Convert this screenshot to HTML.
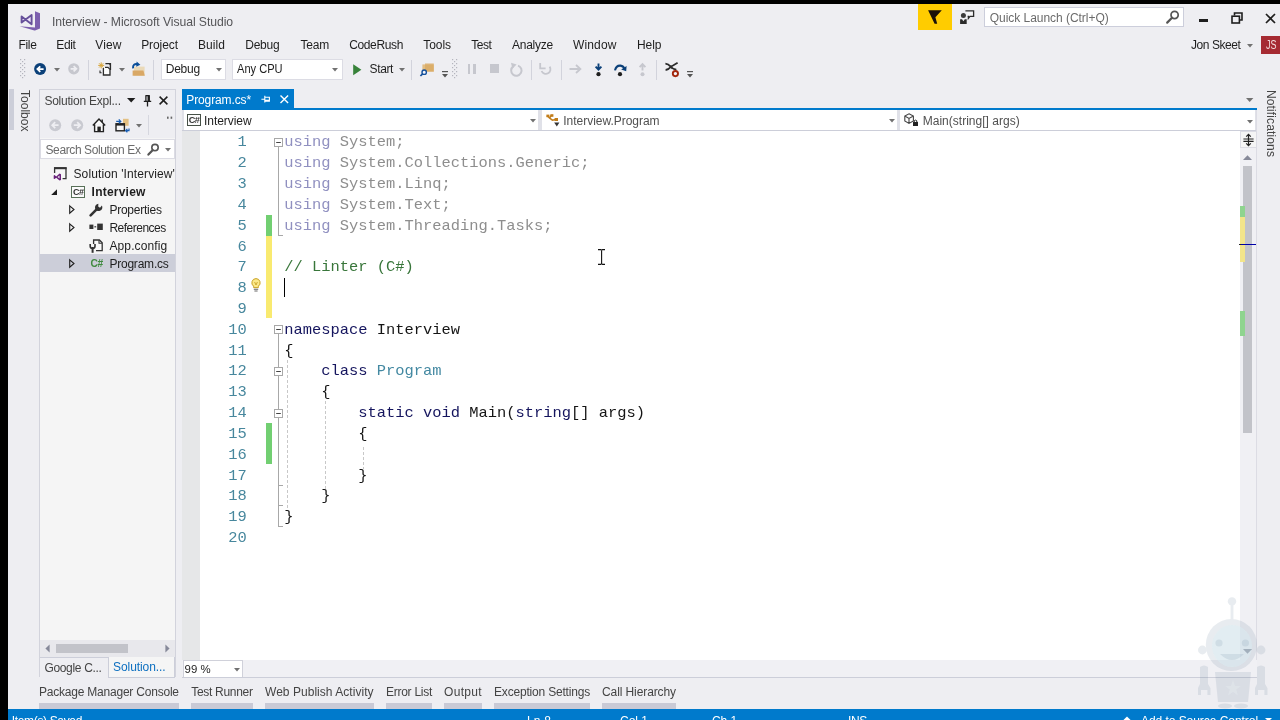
<!DOCTYPE html>
<html lang="en"><head><meta charset="utf-8"><title>Interview - Microsoft Visual Studio</title>
<style>
html,body{margin:0;padding:0;}
body{width:1280px;height:720px;overflow:hidden;background:#000;position:relative;font-family:"Liberation Sans",sans-serif;}
#app{position:absolute;left:8px;top:4px;width:1272px;height:716px;background:#eeeef2;overflow:hidden;}
#root{position:absolute;left:-8px;top:-4px;width:1280px;height:720px;will-change:transform;}
.t{position:absolute;white-space:pre;line-height:1;font-family:"Liberation Sans",sans-serif;font-size:12px;color:#1e1e1e;}
.m{font-family:"Liberation Mono",monospace;}
.b{position:absolute;box-sizing:border-box;}
svg{position:absolute;overflow:visible;}
</style></head><body><div id="app"><div id="root">
<!-- title bar -->
<svg style="left:19.00px;top:10.00px;" width="22" height="22" viewBox="0 0 22 22"><path d="M16 1.2 L21 3.2 V18.6 L16 20.6 Z" fill="#7c5fae"/><path d="M0.6 16.2 L16 17.4 V20.6 L15.4 20.6 Z" fill="#7c5fae"/><path d="M2.6 6.4 L12.6 14.2 V5 L2.6 12.4 Z" fill="#efe4fb" stroke="#66509a" stroke-width="1.9" stroke-linejoin="round"/></svg>
<span class="t" style="left:52.00px;top:16.00px;font-size:12.20px;color:#555558;letter-spacing:-0.067px;">Interview - Microsoft Visual Studio</span>
<div class="b" style="left:918.40px;top:4.00px;width:33.80px;height:25.80px;background:#ffcc00;"></div>
<svg style="left:927.00px;top:9.00px;" width="16" height="16" viewBox="0 0 16 16"><path d="M1.1 1.2 H14.8 L8.4 8.2 L10.2 14.8 H7.6 Z" fill="#1a1208"/></svg>
<svg style="left:958.00px;top:9.00px;" width="18" height="16" viewBox="0 0 18 16"><path d="M7.4 1.8 H15.6 V7.4 H12 L10.4 9.4 V7.4 H9.6" fill="#f4f4f6" stroke="#2b2b2b" stroke-width="1.3"/><circle cx="5.4" cy="6.4" r="2.5" fill="#3a3a3a"/><path d="M2.1 14.9 V10.3 H4 L5.4 12.2 L6.8 10.3 H8.7 V14.9 Z" fill="#2b2b2b"/></svg>
<div class="b" style="left:984.30px;top:6.60px;width:199.40px;height:20.80px;background:#fff;border:1px solid #cccedb;"></div>
<span class="t" style="left:989.70px;top:12.00px;font-size:12.00px;color:#6b6b6b;letter-spacing:-0.034px;">Quick Launch (Ctrl+Q)</span>
<svg style="left:1166.00px;top:10.00px;" width="14" height="14" viewBox="0 0 14 14"><circle cx="8.6" cy="5" r="3.6" fill="none" stroke="#555" stroke-width="1.7"/><path d="M6 7.8 L1.2 12.6" stroke="#555" stroke-width="2.2" stroke-linecap="round"/></svg>
<div class="b" style="left:1198.50px;top:18.60px;width:9.50px;height:3.00px;background:#1e1e1e;"></div>
<svg style="left:1231.00px;top:12.00px;" width="12" height="12" viewBox="0 0 12 12"><path d="M3.5 3.5 V1 H11 V8 H8.5" fill="none" stroke="#1e1e1e" stroke-width="1.6"/><rect x="1" y="4.2" width="7.4" height="6.8" fill="none" stroke="#1e1e1e" stroke-width="1.6"/></svg>
<svg style="left:1265.00px;top:13.00px;" width="11" height="11" viewBox="0 0 11 11"><path d="M1 1 L10 10 M10 1 L1 10" stroke="#1e1e1e" stroke-width="1.7"/></svg>
<!-- menu -->
<span class="t" style="left:18.40px;top:39.00px;font-size:12.00px;color:#1e1e1e;letter-spacing:-0.286px;">File</span>
<span class="t" style="left:56.30px;top:39.00px;font-size:12.00px;color:#1e1e1e;letter-spacing:-0.372px;">Edit</span>
<span class="t" style="left:95.30px;top:39.00px;font-size:12.00px;color:#1e1e1e;letter-spacing:0.101px;">View</span>
<span class="t" style="left:141.20px;top:39.00px;font-size:12.00px;color:#1e1e1e;letter-spacing:-0.080px;">Project</span>
<span class="t" style="left:198.00px;top:39.00px;font-size:12.00px;color:#1e1e1e;letter-spacing:0.062px;">Build</span>
<span class="t" style="left:245.20px;top:39.00px;font-size:12.00px;color:#1e1e1e;letter-spacing:-0.215px;">Debug</span>
<span class="t" style="left:300.50px;top:39.00px;font-size:12.00px;color:#1e1e1e;letter-spacing:-0.211px;">Team</span>
<span class="t" style="left:349.20px;top:39.00px;font-size:12.00px;color:#1e1e1e;letter-spacing:-0.363px;">CodeRush</span>
<span class="t" style="left:423.20px;top:39.00px;font-size:12.00px;color:#1e1e1e;letter-spacing:-0.043px;">Tools</span>
<span class="t" style="left:471.30px;top:39.00px;font-size:12.00px;color:#1e1e1e;letter-spacing:-0.454px;">Test</span>
<span class="t" style="left:512.00px;top:39.00px;font-size:12.00px;color:#1e1e1e;letter-spacing:-0.243px;">Analyze</span>
<span class="t" style="left:573.00px;top:39.00px;font-size:12.00px;color:#1e1e1e;letter-spacing:0.135px;">Window</span>
<span class="t" style="left:637.00px;top:39.00px;font-size:12.00px;color:#1e1e1e;letter-spacing:-0.047px;">Help</span>
<span class="t" style="left:1191.00px;top:39.00px;font-size:12.00px;color:#1e1e1e;letter-spacing:-0.431px;">Jon Skeet</span>
<svg style="left:1247.00px;top:44.10px;" width="6" height="3.4" viewBox="0 0 6 3.4"><path d="M0 0H6 L3 3.4Z" fill="#717171"/></svg>
<div class="b" style="left:1261.30px;top:35.80px;width:19.00px;height:18.60px;background:#a52a32;"></div>
<span class="t" style="left:1266.00px;top:39.00px;font-size:12.00px;color:#f3dede;transform-origin:0 0;transform:scaleX(0.7492);">JS</span>
<!-- toolbar -->
<svg style="left:19.60px;top:59.40px;" width="6" height="20" viewBox="0 0 6 20"><g fill="#b4b5be"><rect x="0" y="0" width="1.2" height="1.2"/><rect x="4" y="0" width="1.2" height="1.2"/><rect x="2" y="2" width="1.2" height="1.2"/><rect x="0" y="4" width="1.2" height="1.2"/><rect x="4" y="4" width="1.2" height="1.2"/><rect x="2" y="6" width="1.2" height="1.2"/><rect x="0" y="8" width="1.2" height="1.2"/><rect x="4" y="8" width="1.2" height="1.2"/><rect x="2" y="10" width="1.2" height="1.2"/><rect x="0" y="12" width="1.2" height="1.2"/><rect x="4" y="12" width="1.2" height="1.2"/><rect x="2" y="14" width="1.2" height="1.2"/><rect x="0" y="16" width="1.2" height="1.2"/><rect x="4" y="16" width="1.2" height="1.2"/><rect x="2" y="18" width="1.2" height="1.2"/></g></svg>
<svg style="left:33.90px;top:62.80px;" width="12.2" height="12.2" viewBox="0 0 12.2 12.2"><circle cx="6.1" cy="6.1" r="6" fill="#0b4079"/><path d="M9.6 6.1 H3.6 M6.3 3.3 L3.4 6.1 L6.3 8.9" fill="none" stroke="#fff" stroke-width="1.8"/></svg>
<svg style="left:54.00px;top:67.80px;" width="6" height="3.4" viewBox="0 0 6 3.4"><path d="M0 0H6 L3 3.4Z" fill="#717171"/></svg>
<svg style="left:68.20px;top:63.00px;" width="11.6" height="11.6" viewBox="0 0 11.6 11.6"><circle cx="5.8" cy="5.8" r="5.6" fill="#c6c7ce"/><path d="M2.6 5.8 H8.2 M5.6 3.2 L8.4 5.8 L5.6 8.4" fill="none" stroke="#eeeef2" stroke-width="1.7"/></svg>
<div class="b" style="left:87.80px;top:59.50px;width:1.00px;height:20.00px;background:#d2d3dc;"></div>
<svg style="left:97.00px;top:61.00px;" width="16" height="16" viewBox="0 0 16 16"><path d="M8.4 2.6 H13.4 V9" fill="none" stroke="#2c2c2c" stroke-width="1.4"/><path d="M11.2 2.2 H13.8 V5" fill="#2c2c2c"/><path d="M6.4 7 V14 H13 V8.4 L11 6.4 H8" fill="#fdfdfd" stroke="#2c2c2c" stroke-width="1.3"/><path d="M3 9.6 V11.8 H4.6" fill="none" stroke="#2c2c2c" stroke-width="1.1"/><path d="M4.2 1.4 V7.4 M1.2 4.4 H7.2 M2.1 2.3 L6.3 6.5 M6.3 2.3 L2.1 6.5" stroke="#d6a43a" stroke-width="1"/></svg>
<svg style="left:118.90px;top:67.80px;" width="6" height="3.4" viewBox="0 0 6 3.4"><path d="M0 0H6 L3 3.4Z" fill="#717171"/></svg>
<svg style="left:131.00px;top:60.50px;" width="17" height="17" viewBox="0 0 17 17"><path d="M3 5.6 H13.6 V14.6 H3 Z" fill="#ead9b8"/><path d="M1.6 9.6 H12.4 L13.8 14.8 H1.6 Z" fill="#d9a866"/><path d="M2 7.4 Q1.6 2 7 3.2" fill="none" stroke="#0b4f9a" stroke-width="1.9"/><path d="M5.6 0.6 L9.4 3.8 L5.2 5.8 Z" fill="#0b4f9a"/></svg>
<div class="b" style="left:153.00px;top:59.50px;width:1.00px;height:20.00px;background:#d2d3dc;"></div>
<div class="b" style="left:161.00px;top:58.50px;width:64.60px;height:21.20px;background:#fff;border:1px solid #dcdce4;"></div>
<span class="t" style="left:165.80px;top:63.00px;font-size:12.00px;color:#1e1e1e;letter-spacing:-0.275px;">Debug</span>
<svg style="left:215.60px;top:67.50px;" width="6" height="3.4" viewBox="0 0 6 3.4"><path d="M0 0H6 L3 3.4Z" fill="#717171"/></svg>
<div class="b" style="left:232.20px;top:58.50px;width:110.60px;height:21.20px;background:#fff;border:1px solid #dcdce4;"></div>
<span class="t" style="left:236.60px;top:63.00px;font-size:12.00px;color:#1e1e1e;transform-origin:0 0;transform:scaleX(0.9238);">Any CPU</span>
<svg style="left:331.60px;top:67.50px;" width="6" height="3.4" viewBox="0 0 6 3.4"><path d="M0 0H6 L3 3.4Z" fill="#717171"/></svg>
<svg style="left:353.20px;top:63.60px;" width="9" height="11.4" viewBox="0 0 9 11.4"><path d="M0.2 0.2 L8.4 5.7 L0.2 11.2 Z" fill="#37823a"/></svg>
<span class="t" style="left:369.50px;top:63.00px;font-size:12.00px;color:#1e1e1e;letter-spacing:-0.349px;">Start</span>
<svg style="left:399.00px;top:67.50px;" width="6" height="3.4" viewBox="0 0 6 3.4"><path d="M0 0H6 L3 3.4Z" fill="#717171"/></svg>
<div class="b" style="left:411.00px;top:59.50px;width:1.00px;height:20.00px;background:#d2d3dc;"></div>
<svg style="left:420.00px;top:60.50px;" width="17" height="17" viewBox="0 0 17 17"><path d="M2.4 3.4 H13.8 V10.6 H2.4 Z" fill="#e2bd83"/><path d="M5 2.4 h8.8 v8.2 h-8.8z" fill="#d9a860" opacity=".7"/><circle cx="4.2" cy="11.2" r="2.2" fill="#f4f4f8" stroke="#14509c" stroke-width="1.4"/><path d="M2.6 12.8 L0.4 15" stroke="#14509c" stroke-width="1.7"/></svg>
<svg style="left:441.80px;top:71.30px;" width="6" height="7" viewBox="0 0 6 7"><rect x="0" y="0" width="6" height="1.2" fill="#555"/><path d="M0 3 H6 L3 6.4Z" fill="#555"/></svg>
<svg style="left:452.40px;top:59.40px;" width="6" height="20" viewBox="0 0 6 20"><g fill="#b4b5be"><rect x="0" y="0" width="1.2" height="1.2"/><rect x="4" y="0" width="1.2" height="1.2"/><rect x="2" y="2" width="1.2" height="1.2"/><rect x="0" y="4" width="1.2" height="1.2"/><rect x="4" y="4" width="1.2" height="1.2"/><rect x="2" y="6" width="1.2" height="1.2"/><rect x="0" y="8" width="1.2" height="1.2"/><rect x="4" y="8" width="1.2" height="1.2"/><rect x="2" y="10" width="1.2" height="1.2"/><rect x="0" y="12" width="1.2" height="1.2"/><rect x="4" y="12" width="1.2" height="1.2"/><rect x="2" y="14" width="1.2" height="1.2"/><rect x="0" y="16" width="1.2" height="1.2"/><rect x="4" y="16" width="1.2" height="1.2"/><rect x="2" y="18" width="1.2" height="1.2"/></g></svg>
<div class="b" style="left:467.60px;top:64.00px;width:2.80px;height:10.00px;background:#c6c7ce;"></div><div class="b" style="left:472.80px;top:64.00px;width:2.80px;height:10.00px;background:#c6c7ce;"></div>
<div class="b" style="left:489.60px;top:64.40px;width:9.00px;height:9.00px;background:#c6c7ce;"></div>
<svg style="left:509.00px;top:61.50px;" width="14" height="15" viewBox="0 0 14 15"><path d="M4.2 4.4 A5.2 5.2 0 1 0 9 3.6" fill="none" stroke="#c6c7ce" stroke-width="2"/><path d="M2 0.8 L7.6 2.6 L3.4 6.8 Z" fill="#c6c7ce"/></svg>
<div class="b" style="left:530.60px;top:59.50px;width:1.00px;height:20.00px;background:#d2d3dc;"></div>
<svg style="left:539.00px;top:62.00px;" width="14" height="14" viewBox="0 0 14 14"><path d="M3.4 4.6 A4.6 4.6 0 1 0 11.4 9" fill="none" stroke="#c6c7ce" stroke-width="1.8" transform="scale(-1,1) translate(-14,0)"/><path d="M1.2 1 V6.4 H6.6" fill="none" stroke="#c6c7ce" stroke-width="1.8"/></svg>
<div class="b" style="left:560.80px;top:59.50px;width:1.00px;height:20.00px;background:#d2d3dc;"></div>
<svg style="left:568.50px;top:64.00px;" width="13" height="10" viewBox="0 0 13 10"><path d="M0.5 5 H11 M7 1 L11.4 5 L7 9" fill="none" stroke="#c6c7ce" stroke-width="1.8"/></svg>
<svg style="left:592.50px;top:61.50px;" width="11" height="15" viewBox="0 0 11 15"><path d="M5.5 1.4 V7 M2.6 4.6 L5.5 7.6 L8.4 4.6" fill="none" stroke="#0b4079" stroke-width="1.9"/><circle cx="5.5" cy="12.2" r="2.1" fill="#1e1e1e"/></svg>
<svg style="left:612.00px;top:61.50px;" width="16" height="15" viewBox="0 0 16 15"><path d="M3 8.4 Q4 3.4 8.4 3.6 Q11.6 4 12.4 7" fill="none" stroke="#0b4079" stroke-width="2.1"/><path d="M9.2 7.4 L14.6 4 L14.2 9.2 Z" fill="#0b4079"/><circle cx="8" cy="12.2" r="2.1" fill="#1e1e1e"/></svg>
<svg style="left:636.50px;top:61.50px;" width="11" height="15" viewBox="0 0 11 15"><path d="M5.5 8.4 V2.6 M2.6 5.2 L5.5 2.2 L8.4 5.2" fill="none" stroke="#c6c7ce" stroke-width="1.9"/><circle cx="5.5" cy="12.2" r="2" fill="#c6c7ce"/></svg>
<div class="b" style="left:656.20px;top:59.50px;width:1.00px;height:20.00px;background:#d2d3dc;"></div>
<svg style="left:664.00px;top:61.50px;" width="17" height="16" viewBox="0 0 17 16"><path d="M1.4 1.6 Q4.4 1.8 6.6 4.6 Q9 7.6 12.4 7.6 M1.6 8 Q4.6 7.8 6.8 4.8 L13.6 0.8" fill="none" stroke="#2b2b2b" stroke-width="1.8"/><circle cx="11.4" cy="11.6" r="2.6" fill="#f4f4f8" stroke="#a1260d" stroke-width="1.9"/></svg>
<svg style="left:687.00px;top:71.30px;" width="6" height="7" viewBox="0 0 6 7"><rect x="0" y="0" width="6" height="1.2" fill="#555"/><path d="M0 3 H6 L3 6.4Z" fill="#555"/></svg>
<!-- toolbox -->
<div class="b" style="left:8.60px;top:89.00px;width:5.00px;height:41.00px;background:#ccced9;"></div>
<span class="t" style="left:31px;top:89.8px;font-size:12px;color:#444;transform-origin:0 0;transform:rotate(90deg);letter-spacing:0.02px;">Toolbox</span>
<span class="t" style="left:1277.4px;top:89.8px;font-size:12px;color:#444;transform-origin:0 0;transform:rotate(90deg);letter-spacing:0.13px;">Notifications</span>
<!-- solution explorer -->
<div class="b" style="left:39.00px;top:89.00px;width:137.00px;height:588.40px;background:#f5f5f5;border:1px solid #d2d3dc;"></div>
<div class="b" style="left:40.00px;top:90.00px;width:135.00px;height:22.00px;background:#eeeef2;"></div>
<span class="t" style="left:44.40px;top:95.00px;font-size:12.00px;color:#444;letter-spacing:-0.228px;">Solution Expl...</span>
<svg style="left:126.80px;top:97.90px;" width="8.4" height="4.6" viewBox="0 0 8.4 4.6"><path d="M0 0H8.4 L4.2 4.6Z" fill="#1e1e1e"/></svg>
<svg style="left:143.00px;top:94.60px;" width="9" height="12" viewBox="0 0 9 12"><path d="M2.4 0.7 H6.8 M2.9 0.7 V6.2 M6.3 0.7 V6.2 M5.2 0.7 V6.2 M0.8 6.4 H8.2 M4.5 6.6 V11.6" fill="none" stroke="#1e1e1e" stroke-width="1.3"/></svg>
<svg style="left:159.40px;top:95.60px;" width="9" height="9" viewBox="0 0 9 9"><path d="M0.6 0.6 L8.4 8.4 M8.4 0.6 L0.6 8.4" stroke="#1e1e1e" stroke-width="1.5"/></svg>
<div class="b" style="left:40.00px;top:112.00px;width:135.00px;height:26.00px;background:#eeeef2;"></div>
<svg style="left:49.00px;top:119.00px;" width="12.4" height="12.4" viewBox="0 0 12.4 12.4"><circle cx="6.2" cy="6.2" r="6" fill="#c9cad1"/><path d="M9.6 6.2 H3.4 M6.2 3.2 L3.2 6.2 L6.2 9.2" fill="none" stroke="#eeeef2" stroke-width="1.7"/></svg>
<svg style="left:70.50px;top:119.00px;" width="12.4" height="12.4" viewBox="0 0 12.4 12.4"><circle cx="6.2" cy="6.2" r="6" fill="#c9cad1"/><path d="M2.8 6.2 H9 M6.2 3.2 L9.2 6.2 L6.2 9.2" fill="none" stroke="#eeeef2" stroke-width="1.7"/></svg>
<svg style="left:92.00px;top:118.00px;" width="14" height="14.4" viewBox="0 0 14 14.4"><path d="M0.8 7.4 L7 1 L13.2 7.4 M2.6 6.4 V13.6 H11.4 V6.4" fill="#fafafa" stroke="#222" stroke-width="1.4"/><rect x="5.4" y="8.6" width="3.4" height="5" fill="#222"/><path d="M10.2 1.6 V4" stroke="#222" stroke-width="1.4"/></svg>
<svg style="left:114.60px;top:117.60px;" width="15" height="14" viewBox="0 0 15 14"><rect x="8" y="0.8" width="5.6" height="7" fill="#e3c083"/><rect x="1" y="5.8" width="8.4" height="7" fill="#f6f6f6" stroke="#222" stroke-width="1.4"/><path d="M1 6.6 H9.4" stroke="#222" stroke-width="2"/><path d="M1.2 3.4 H5.4 M3.8 1.4 L5.8 3.4 L3.8 5.2" fill="none" stroke="#1a5fb4" stroke-width="1.2"/><path d="M14 10.4 V12.6 H10.8 M12.4 10.8 L10.6 12.6 L12.4 14.2" fill="none" stroke="#1a5fb4" stroke-width="1.2"/></svg>
<svg style="left:136.00px;top:123.70px;" width="6" height="3.4" viewBox="0 0 6 3.4"><path d="M0 0H6 L3 3.4Z" fill="#717171"/></svg>
<div class="b" style="left:148.40px;top:114.60px;width:1.00px;height:20.60px;background:#d6d7df;"></div>
<svg style="left:166.60px;top:115.60px;" width="6" height="4" viewBox="0 0 6 4"><rect x="0" y="0.6" width="1.6" height="2.2" fill="#666"/><rect x="3.6" y="0.6" width="1.6" height="2.2" fill="#666"/></svg>
<div class="b" style="left:40.00px;top:139.00px;width:135.00px;height:20.40px;background:#fff;border:1px solid #dcdce4;"></div>
<span class="t" style="left:45.50px;top:144.00px;font-size:12.00px;color:#6b6b6b;letter-spacing:-0.392px;">Search Solution Ex</span>
<svg style="left:147.40px;top:143.00px;" width="13" height="13" viewBox="0 0 13 13"><circle cx="8" cy="4.6" r="3.2" fill="none" stroke="#555" stroke-width="1.6"/><path d="M5.6 7.2 L1.4 11.6" stroke="#555" stroke-width="2.2" stroke-linecap="round"/></svg>
<svg style="left:164.60px;top:147.70px;" width="6" height="3.4" viewBox="0 0 6 3.4"><path d="M0 0H6 L3 3.4Z" fill="#717171"/></svg>
<div class="b" style="left:40.00px;top:254.40px;width:135.00px;height:18.00px;background:#ccced9;"></div>
<svg style="left:53.00px;top:167.00px;" width="14.4" height="14" viewBox="0 0 14.4 14"><path d="M1.6 6 V1 H13 V11.6 H9.6" fill="none" stroke="#333" stroke-width="1.3"/><path d="M1 1.2 H13.6" stroke="#333" stroke-width="2"/><path d="M6.6 6.6 L8 7.2 V13 L6.6 13.6 L3.2 10.8 L1.6 12.1 L0.7 11.7 V8.5 L1.6 8.1 L3.2 9.4 Z M6.5 8.6 L4.6 10.1 L6.5 11.6 Z" fill="#68217a" fill-rule="evenodd"/></svg>
<span class="t" style="left:73.50px;top:168.00px;font-size:12.00px;color:#1e1e1e;letter-spacing:0.109px;">Solution 'Interview'</span>
<svg style="left:50.60px;top:188.50px;" width="6.4" height="6.4" viewBox="0 0 6.4 6.4"><path d="M6 0.2 V6 H0.2 Z" fill="#1e1e1e"/></svg>
<div class="b" style="left:71.20px;top:186.20px;width:13.80px;height:11.60px;background:#fbfbfb;border:1px solid #587058;"></div><span class="t" style="left:73.00px;top:187.70px;font-size:9.0px;font-weight:700;color:#333;letter-spacing:-0.6px;">C#</span>
<span class="t" style="left:91.60px;top:186.00px;font-size:12.00px;color:#1e1e1e;font-weight:700;letter-spacing:0.219px;">Interview</span>
<svg style="left:69.00px;top:205.00px;" width="6" height="9" viewBox="0 0 6 9"><path d="M0.7 0.8 L5 4.5 L0.7 8.2 Z" fill="none" stroke="#1e1e1e" stroke-width="1.1"/></svg>
<svg style="left:89.00px;top:202.60px;" width="14" height="14" viewBox="0 0 14 14"><path d="M1.6 12.4 L7.6 6.4" stroke="#333" stroke-width="2.6" stroke-linecap="round"/><path d="M12.9 2.6 A3.7 3.7 0 1 1 9.4 0.7 L9.2 3.4 L11 4.8 Z" fill="#333"/></svg>
<span class="t" style="left:109.40px;top:204.00px;font-size:12.00px;color:#1e1e1e;letter-spacing:-0.240px;">Properties</span>
<svg style="left:69.00px;top:223.00px;" width="6" height="9" viewBox="0 0 6 9"><path d="M0.7 0.8 L5 4.5 L0.7 8.2 Z" fill="none" stroke="#1e1e1e" stroke-width="1.1"/></svg>
<svg style="left:89.00px;top:222.00px;" width="14" height="10" viewBox="0 0 14 10"><rect x="0.4" y="2.6" width="4" height="4.4" fill="#333"/><rect x="5.4" y="4.2" width="1.8" height="1.2" fill="#333"/><rect x="8.2" y="1.6" width="5.6" height="6.4" fill="#333"/></svg>
<span class="t" style="left:109.40px;top:222.00px;font-size:12.00px;color:#1e1e1e;letter-spacing:-0.498px;">References</span>
<svg style="left:89.00px;top:238.80px;" width="14" height="15" viewBox="0 0 14 15"><path d="M4.6 5 V1 H10.4 L13.2 3.8 V11.6 H7" fill="#fafafa" stroke="#333" stroke-width="1.3"/><path d="M10 1.2 V4.2 H13" fill="none" stroke="#333" stroke-width="1.1"/><path d="M3.6 8 V13.8" stroke="#333" stroke-width="2"/><path d="M1.2 5 V7.2 Q1.2 9.4 3.6 9.4 Q6 9.4 6 7.2 V5" fill="none" stroke="#333" stroke-width="1.6"/></svg>
<span class="t" style="left:109.40px;top:240.00px;font-size:12.00px;color:#1e1e1e;letter-spacing:0.128px;">App.config</span>
<svg style="left:69.00px;top:259.00px;" width="6" height="9" viewBox="0 0 6 9"><path d="M0.7 0.8 L5 4.5 L0.7 8.2 Z" fill="none" stroke="#1e1e1e" stroke-width="1.1"/></svg>
<span class="t" style="left:90.6px;top:259px;font-size:10.2px;font-weight:700;color:#3f8a3f;letter-spacing:-0.4px;">C#</span>
<span class="t" style="left:109.40px;top:258.00px;font-size:12.00px;color:#1e1e1e;letter-spacing:-0.216px;">Program.cs</span>
<div class="b" style="left:40.00px;top:640.00px;width:135.00px;height:17.00px;background:#e8e8ec;"></div>
<svg style="left:45.00px;top:644.00px;" width="5" height="9" viewBox="0 0 5 9"><path d="M4.6 0.4 V8.6 L0.4 4.5 Z" fill="#868999"/></svg>
<svg style="left:164.60px;top:644.00px;" width="5" height="9" viewBox="0 0 5 9"><path d="M0.4 0.4 V8.6 L4.6 4.5 Z" fill="#868999"/></svg>
<div class="b" style="left:56.00px;top:643.80px;width:72.00px;height:8.80px;background:#c2c3c9;"></div>
<div class="b" style="left:40.00px;top:657.00px;width:135.00px;height:1.00px;background:#ccced9;"></div>
<div class="b" style="left:40.00px;top:658.00px;width:68.00px;height:19.40px;background:#eeeef2;"></div>
<div class="b" style="left:108.00px;top:657.00px;width:67.10px;height:20.50px;background:#f5f5f5;border:1px solid #ccced9;border-top:none;"></div>
<span class="t" style="left:44.40px;top:662.00px;font-size:12.00px;color:#444;letter-spacing:-0.318px;">Google C...</span>
<span class="t" style="left:113.00px;top:661.00px;font-size:12.00px;color:#0e70c0;letter-spacing:-0.070px;">Solution...</span>
<!-- editor -->
<div class="b" style="left:182.00px;top:89.00px;width:112.00px;height:19.00px;background:#007acc;"></div>
<div class="b" style="left:182.00px;top:107.60px;width:1074.80px;height:2.40px;background:#007acc;"></div>
<span class="t" style="left:186.30px;top:94.00px;font-size:12.00px;color:#fff;letter-spacing:-0.121px;">Program.cs*</span>
<svg style="left:261.00px;top:95.40px;" width="9.4" height="8.4" viewBox="0 0 9.4 8.4"><path d="M0.4 4.2 H3.8 M3.8 0.8 V7.6 M3.8 2.2 H8.4 V6.2 H3.8 M3.8 5.4 H8.4" fill="none" stroke="#fff" stroke-width="1.1"/></svg>
<svg style="left:280.00px;top:95.40px;" width="8.6" height="8.6" viewBox="0 0 8.6 8.6"><path d="M0.5 0.5 L8.1 8.1 M8.1 0.5 L0.5 8.1" stroke="#fff" stroke-width="1.4"/></svg>
<svg style="left:1246.30px;top:97.80px;" width="7.4" height="4" viewBox="0 0 7.4 4"><path d="M0 0H7.4 L3.7 4Z" fill="#717171"/></svg>
<div class="b" style="left:182.00px;top:110.00px;width:1074.80px;height:21.00px;background:#e0e1e8;"></div>
<div class="b" style="left:184.00px;top:110.40px;width:354.00px;height:19.80px;background:#fff;"></div>
<div class="b" style="left:542.20px;top:110.40px;width:354.40px;height:19.80px;background:#fff;"></div>
<div class="b" style="left:900.40px;top:110.40px;width:355.00px;height:19.80px;background:#fff;"></div>
<div class="b" style="left:182.00px;top:130.20px;width:1074.80px;height:1.00px;background:#ccced9;"></div>
<div class="b" style="left:187.00px;top:114.00px;width:14.00px;height:12.00px;background:#fbfbfb;border:1px solid #465046;"></div><span class="t" style="left:188.80px;top:115.60px;font-size:9.2px;font-weight:700;color:#333;letter-spacing:-0.6px;">C#</span>
<span class="t" style="left:204.00px;top:115.00px;font-size:12.00px;color:#1e1e1e;letter-spacing:-0.048px;">Interview</span>
<svg style="left:529.80px;top:119.30px;" width="6" height="3.4" viewBox="0 0 6 3.4"><path d="M0 0H6 L3 3.4Z" fill="#717171"/></svg>
<svg style="left:546.00px;top:113.60px;" width="14" height="13" viewBox="0 0 14 13"><path d="M1 1.6 L3.6 4 M5.4 1.2 L3.6 4 L6.4 6.2 L9.6 5.4" fill="none" stroke="#c27d1a" stroke-width="1.5"/><rect x="0.4" y="0.6" width="3" height="2.6" fill="#c27d1a"/><rect x="4.4" y="0.2" width="3" height="2.6" fill="#c27d1a"/><rect x="8.6" y="4" width="3.4" height="3" fill="#c27d1a"/><path d="M8.2 8.4 H13.4 L10.8 12.6 Z" fill="#333"/></svg>
<span class="t" style="left:563.30px;top:115.00px;font-size:12.00px;color:#505050;letter-spacing:-0.030px;">Interview.Program</span>
<svg style="left:888.80px;top:119.30px;" width="6" height="3.4" viewBox="0 0 6 3.4"><path d="M0 0H6 L3 3.4Z" fill="#717171"/></svg>
<svg style="left:904.00px;top:113.40px;" width="15" height="14" viewBox="0 0 15 14"><path d="M5 0.8 L9.4 3 V8 L5 10.4 L0.8 8 V3 Z M0.8 3 L5 5.4 L9.4 3 M5 5.4 V10.4" fill="none" stroke="#444" stroke-width="1.1"/><rect x="9" y="9" width="5" height="4" fill="#222"/><path d="M10.2 9 V7.8 Q11.5 6.4 12.8 7.8 V9" fill="none" stroke="#222" stroke-width="1"/></svg>
<span class="t" style="left:922.70px;top:115.00px;font-size:12.00px;color:#505050;letter-spacing:0.016px;">Main(string[] args)</span>
<svg style="left:1247.00px;top:119.70px;" width="6" height="3.4" viewBox="0 0 6 3.4"><path d="M0 0H6 L3 3.4Z" fill="#717171"/></svg>
<div class="b" style="left:182.00px;top:131.20px;width:1074.80px;height:529.00px;background:#fff;"></div>
<div class="b" style="left:182.00px;top:131.20px;width:18.00px;height:529.00px;background:#e6e7e8;"></div>
<div class="b" style="left:266.20px;top:215.20px;width:5.80px;height:20.80px;background:#72cf72;"></div>
<div class="b" style="left:266.20px;top:236.00px;width:5.80px;height:82.40px;background:#f9ea70;"></div>
<div class="b" style="left:266.20px;top:422.60px;width:5.80px;height:41.60px;background:#72cf72;"></div>
<span class="t m" style="left:237.55px;top:135.00px;font-size:15.41px;color:#47879d;">1</span>
<span class="t m" style="left:237.55px;top:156.00px;font-size:15.41px;color:#47879d;">2</span>
<span class="t m" style="left:237.55px;top:177.00px;font-size:15.41px;color:#47879d;">3</span>
<span class="t m" style="left:237.55px;top:198.00px;font-size:15.41px;color:#47879d;">4</span>
<span class="t m" style="left:237.55px;top:219.00px;font-size:15.41px;color:#47879d;">5</span>
<span class="t m" style="left:237.55px;top:240.00px;font-size:15.41px;color:#47879d;">6</span>
<span class="t m" style="left:237.55px;top:260.00px;font-size:15.41px;color:#47879d;">7</span>
<span class="t m" style="left:237.55px;top:281.00px;font-size:15.41px;color:#47879d;">8</span>
<span class="t m" style="left:237.55px;top:302.00px;font-size:15.41px;color:#47879d;">9</span>
<span class="t m" style="left:228.30px;top:323.00px;font-size:15.41px;color:#47879d;">10</span>
<span class="t m" style="left:228.30px;top:344.00px;font-size:15.41px;color:#47879d;">11</span>
<span class="t m" style="left:228.30px;top:364.00px;font-size:15.41px;color:#47879d;">12</span>
<span class="t m" style="left:228.30px;top:385.00px;font-size:15.41px;color:#47879d;">13</span>
<span class="t m" style="left:228.30px;top:406.00px;font-size:15.41px;color:#47879d;">14</span>
<span class="t m" style="left:228.30px;top:427.00px;font-size:15.41px;color:#47879d;">15</span>
<span class="t m" style="left:228.30px;top:448.00px;font-size:15.41px;color:#47879d;">16</span>
<span class="t m" style="left:228.30px;top:469.00px;font-size:15.41px;color:#47879d;">17</span>
<span class="t m" style="left:228.30px;top:489.00px;font-size:15.41px;color:#47879d;">18</span>
<span class="t m" style="left:228.30px;top:510.00px;font-size:15.41px;color:#47879d;">19</span>
<span class="t m" style="left:228.30px;top:531.00px;font-size:15.41px;color:#47879d;">20</span>
<span class="t m" style="left:284.30px;top:135.00px;font-size:15.41px;color:#9090c0;">using</span>
<span class="t m" style="left:330.54px;top:135.00px;font-size:15.41px;color:#8e8e8e;"> </span>
<span class="t m" style="left:339.79px;top:135.00px;font-size:15.41px;color:#8e8e8e;">System;</span>
<span class="t m" style="left:284.30px;top:156.00px;font-size:15.41px;color:#9090c0;">using</span>
<span class="t m" style="left:330.54px;top:156.00px;font-size:15.41px;color:#8e8e8e;"> </span>
<span class="t m" style="left:339.79px;top:156.00px;font-size:15.41px;color:#8e8e8e;">System.Collections.Generic;</span>
<span class="t m" style="left:284.30px;top:177.00px;font-size:15.41px;color:#9090c0;">using</span>
<span class="t m" style="left:330.54px;top:177.00px;font-size:15.41px;color:#8e8e8e;"> </span>
<span class="t m" style="left:339.79px;top:177.00px;font-size:15.41px;color:#8e8e8e;">System.Linq;</span>
<span class="t m" style="left:284.30px;top:198.00px;font-size:15.41px;color:#9090c0;">using</span>
<span class="t m" style="left:330.54px;top:198.00px;font-size:15.41px;color:#8e8e8e;"> </span>
<span class="t m" style="left:339.79px;top:198.00px;font-size:15.41px;color:#8e8e8e;">System.Text;</span>
<span class="t m" style="left:284.30px;top:219.00px;font-size:15.41px;color:#9090c0;">using</span>
<span class="t m" style="left:330.54px;top:219.00px;font-size:15.41px;color:#8e8e8e;"> </span>
<span class="t m" style="left:339.79px;top:219.00px;font-size:15.41px;color:#8e8e8e;">System.Threading.Tasks;</span>
<span class="t m" style="left:284.30px;top:260.00px;font-size:15.41px;color:#38763a;">// Linter (C#)</span>
<span class="t m" style="left:284.30px;top:323.00px;font-size:15.41px;color:#15155e;">namespace</span>
<span class="t m" style="left:367.53px;top:323.00px;font-size:15.41px;color:#151515;"> </span>
<span class="t m" style="left:376.78px;top:323.00px;font-size:15.41px;color:#151515;">Interview</span>
<span class="t m" style="left:284.30px;top:344.00px;font-size:15.41px;color:#151515;">{</span>
<span class="t m" style="left:321.29px;top:364.00px;font-size:15.41px;color:#15155e;">class</span>
<span class="t m" style="left:367.53px;top:364.00px;font-size:15.41px;color:#151515;"> </span>
<span class="t m" style="left:376.78px;top:364.00px;font-size:15.41px;color:#4489a2;">Program</span>
<span class="t m" style="left:321.29px;top:385.00px;font-size:15.41px;color:#151515;">{</span>
<span class="t m" style="left:358.28px;top:406.00px;font-size:15.41px;color:#15155e;">static</span>
<span class="t m" style="left:413.77px;top:406.00px;font-size:15.41px;color:#151515;"> </span>
<span class="t m" style="left:423.02px;top:406.00px;font-size:15.41px;color:#15155e;">void</span>
<span class="t m" style="left:460.01px;top:406.00px;font-size:15.41px;color:#151515;"> </span>
<span class="t m" style="left:469.26px;top:406.00px;font-size:15.41px;color:#151515;">Main(</span>
<span class="t m" style="left:515.50px;top:406.00px;font-size:15.41px;color:#15155e;">string</span>
<span class="t m" style="left:570.99px;top:406.00px;font-size:15.41px;color:#151515;">[] args)</span>
<span class="t m" style="left:358.28px;top:427.00px;font-size:15.41px;color:#151515;">{</span>
<span class="t m" style="left:358.28px;top:469.00px;font-size:15.41px;color:#151515;">}</span>
<span class="t m" style="left:321.29px;top:489.00px;font-size:15.41px;color:#151515;">}</span>
<span class="t m" style="left:284.30px;top:510.00px;font-size:15.41px;color:#151515;">}</span>
<div class="b" style="left:284.00px;top:277.60px;width:1.00px;height:19.60px;background:#000;"></div>
<div class="b" style="left:278.00px;top:147.30px;width:1.00px;height:88.10px;background:#a8a8a8;"></div><div class="b" style="left:278.00px;top:234.60px;width:5.00px;height:1.00px;background:#a8a8a8;"></div>
<svg style="left:273.80px;top:138.05px;" width="9" height="9" viewBox="0 0 9 9"><rect x="0.5" y="0.5" width="8" height="8" fill="#fff" stroke="#a8a8a8"/><path d="M2.2 4.5 H6.8" stroke="#444" stroke-width="1"/></svg>
<div class="b" style="left:278.00px;top:334.43px;width:1.00px;height:192.38px;background:#a8a8a8;"></div><div class="b" style="left:278.00px;top:526.21px;width:5.00px;height:1.00px;background:#a8a8a8;"></div>
<div class="b" style="left:278.00px;top:505.39px;width:5.00px;height:1.00px;background:#a8a8a8;"></div><div class="b" style="left:278.00px;top:484.57px;width:5.00px;height:1.00px;background:#a8a8a8;"></div>
<svg style="left:273.80px;top:325.43px;" width="9" height="9" viewBox="0 0 9 9"><rect x="0.5" y="0.5" width="8" height="8" fill="#fff" stroke="#a8a8a8"/><path d="M2.2 4.5 H6.8" stroke="#444" stroke-width="1"/></svg><svg style="left:273.80px;top:367.07px;" width="9" height="9" viewBox="0 0 9 9"><rect x="0.5" y="0.5" width="8" height="8" fill="#fff" stroke="#a8a8a8"/><path d="M2.2 4.5 H6.8" stroke="#444" stroke-width="1"/></svg><svg style="left:273.80px;top:408.71px;" width="9" height="9" viewBox="0 0 9 9"><rect x="0.5" y="0.5" width="8" height="8" fill="#fff" stroke="#a8a8a8"/><path d="M2.2 4.5 H6.8" stroke="#444" stroke-width="1"/></svg>
<div class="b" style="left:287.40px;top:359.65px;width:1.00px;height:150.56px;background:repeating-linear-gradient(to bottom,#c8c8c8 0,#c8c8c8 3px,transparent 3px,transparent 5px);"></div>
<div class="b" style="left:325.40px;top:401.29px;width:1.00px;height:88.10px;background:repeating-linear-gradient(to bottom,#c8c8c8 0,#c8c8c8 3px,transparent 3px,transparent 5px);"></div>
<div class="b" style="left:362.60px;top:446.93px;width:1.00px;height:21.64px;background:repeating-linear-gradient(to bottom,#c8c8c8 0,#c8c8c8 3px,transparent 3px,transparent 5px);"></div>
<svg style="left:251.00px;top:278.20px;" width="10" height="14" viewBox="0 0 10 14"><path d="M5 0.6 A4.2 4.2 0 0 1 7.4 8.2 V9.6 H2.6 V8.2 A4.2 4.2 0 0 1 5 0.6 Z" fill="#fbe98a" stroke="#c9a227" stroke-width="1"/><path d="M3.6 4 L5 7 L6.4 4" fill="none" stroke="#c9a227" stroke-width=".9"/><path d="M2.8 11.2 H7.2 M3.4 13 H6.6" stroke="#666" stroke-width="1.1"/></svg>
<svg style="left:598.00px;top:249.00px;" width="7" height="16" viewBox="0 0 7 16"><path d="M0 0.6 H2.6 L3.6 1.3 L4.6 0.6 H7 M3.6 1 V15 M0 15.4 H2.6 L3.6 14.7 L4.6 15.4 H7" fill="none" stroke="#111" stroke-width="1.1"/></svg>
<div class="b" style="left:1239.60px;top:131.20px;width:17.20px;height:529.00px;background:#f0f0f4;"></div>
<div class="b" style="left:1239.60px;top:131.20px;width:17.20px;height:17.20px;background:#f5f5f5;border:1px solid #dcdce4;"></div>
<svg style="left:1242.60px;top:134.00px;" width="11" height="12" viewBox="0 0 11 12"><path d="M0.4 5 H10.6 M0.4 7.4 H10.6 M5.5 0.4 V11.6 M3.2 2.6 L5.5 0.3 L7.8 2.6 M3.2 9.4 L5.5 11.7 L7.8 9.4" fill="none" stroke="#222" stroke-width="1.2"/></svg>
<svg style="left:1243.40px;top:155.00px;" width="9" height="5" viewBox="0 0 9 5"><path d="M0 5 H9 L4.5 0.2 Z" fill="#868999"/></svg>
<svg style="left:1243.40px;top:648.80px;" width="9" height="5" viewBox="0 0 9 5"><path d="M0 0 H9 L4.5 4.8 Z" fill="#868999"/></svg>
<div class="b" style="left:1243.40px;top:166.20px;width:8.60px;height:267.20px;background:#c2c3c9;"></div>
<div class="b" style="left:1239.60px;top:205.60px;width:5.60px;height:11.60px;background:#8fd48f;"></div>
<div class="b" style="left:1239.60px;top:217.20px;width:5.60px;height:45.00px;background:#f3e58a;"></div>
<div class="b" style="left:1239.60px;top:311.00px;width:5.60px;height:25.40px;background:#8fd48f;"></div>
<div class="b" style="left:1240.60px;top:243.60px;width:15.40px;height:1.60px;background:#0000a8;"></div>
<div class="b" style="left:1239.20px;top:243.60px;width:1.40px;height:1.60px;background:#222;"></div>
<div class="b" style="left:1256.40px;top:110.40px;width:1.00px;height:567.00px;background:#dcdce4;"></div>
<div class="b" style="left:182.00px;top:660.20px;width:1074.80px;height:17.00px;background:#f0f0f4;"></div>
<div class="b" style="left:183.00px;top:660.00px;width:59.60px;height:17.60px;background:#fff;border:1px solid #d0d1da;"></div>
<span class="t" style="left:184.60px;top:664.00px;font-size:11.40px;color:#1e1e1e;letter-spacing:0.008px;">99 %</span>
<svg style="left:234.00px;top:667.50px;" width="6" height="3.4" viewBox="0 0 6 3.4"><path d="M0 0H6 L3 3.4Z" fill="#717171"/></svg>
<div class="b" style="left:182.00px;top:677.00px;width:1074.80px;height:1.00px;background:#ccced9;"></div>
<!-- bottom tabs -->
<span class="t" style="left:39.00px;top:686.00px;font-size:12.00px;color:#444;letter-spacing:-0.216px;">Package Manager Console</span>
<div class="b" style="left:39.00px;top:703.40px;width:139.80px;height:5.40px;background:#c9cad6;"></div>
<span class="t" style="left:191.20px;top:686.00px;font-size:12.00px;color:#444;letter-spacing:-0.300px;">Test Runner</span>
<div class="b" style="left:191.20px;top:703.40px;width:61.40px;height:5.40px;background:#c9cad6;"></div>
<span class="t" style="left:265.00px;top:686.00px;font-size:12.00px;color:#444;letter-spacing:0.039px;">Web Publish Activity</span>
<div class="b" style="left:265.00px;top:703.40px;width:108.60px;height:5.40px;background:#c9cad6;"></div>
<span class="t" style="left:386.00px;top:686.00px;font-size:12.00px;color:#444;letter-spacing:-0.269px;">Error List</span>
<div class="b" style="left:386.00px;top:703.40px;width:46.00px;height:5.40px;background:#c9cad6;"></div>
<span class="t" style="left:444.00px;top:686.00px;font-size:12.00px;color:#444;letter-spacing:0.328px;">Output</span>
<div class="b" style="left:444.00px;top:703.40px;width:38.00px;height:5.40px;background:#c9cad6;"></div>
<span class="t" style="left:494.00px;top:686.00px;font-size:12.00px;color:#444;letter-spacing:-0.189px;">Exception Settings</span>
<div class="b" style="left:494.00px;top:703.40px;width:96.00px;height:5.40px;background:#c9cad6;"></div>
<span class="t" style="left:602.00px;top:686.00px;font-size:12.00px;color:#444;letter-spacing:-0.097px;">Call Hierarchy</span>
<div class="b" style="left:602.00px;top:703.40px;width:74.00px;height:5.40px;background:#c9cad6;"></div>
<!-- status bar -->
<div class="b" style="left:8.00px;top:708.80px;width:1272.00px;height:11.20px;background:#007acc;overflow:hidden;"></div>
<span class="t" style="left:11.80px;top:715.00px;font-size:12.00px;color:#fff;letter-spacing:-0.346px;">Item(s) Saved</span>
<span class="t" style="left:527.00px;top:715.00px;font-size:12.00px;color:#fff;letter-spacing:0.160px;">Ln 8</span>
<span class="t" style="left:620.00px;top:715.00px;font-size:12.00px;color:#fff;letter-spacing:-0.003px;">Col 1</span>
<span class="t" style="left:712.00px;top:715.00px;font-size:12.00px;color:#fff;letter-spacing:-0.090px;">Ch 1</span>
<span class="t" style="left:848.00px;top:715.00px;font-size:12.00px;color:#fff;letter-spacing:-0.339px;">INS</span>
<span class="t" style="left:1141.00px;top:715.00px;font-size:12.00px;color:#fff;letter-spacing:-0.051px;">Add to Source Control</span>
<svg style="left:1122.00px;top:716.00px;" width="10" height="6" viewBox="0 0 10 6"><path d="M5 0.4 L9.6 5 V6 H0.4 V5 Z" fill="#fff"/></svg>
<svg style="left:1265.00px;top:718.20px;" width="7" height="4" viewBox="0 0 7 4"><path d="M0 0 H7 L3.5 3.6Z" fill="#fff"/></svg>
<!-- watermark -->
<svg style="left:1192.00px;top:596.00px;" width="76" height="116" viewBox="0 0 76 116"><g opacity=".125" fill="#4b6a86">
<circle cx="40" cy="5.4" r="4.2"/><rect x="38.6" y="8" width="2.8" height="16"/>
<ellipse cx="39.4" cy="49" rx="25.6" ry="26"/>
<circle cx="10.4" cy="54" r="4.4"/><circle cx="69" cy="54" r="4.4"/>
<path d="M23 76 H59 L56 106 H26 Z"/>
<path d="M8 71 Q12 68 16 71 V88 L18.4 92 V99 H15.4 V94 H9 V99 H6 V92 L8 88 Z"/>
<path d="M65 71 Q69 68 73 71 V88 L75.4 92 V99 H72.4 V94 H66 V99 H63 V92 L65 88 Z"/>
<ellipse cx="33" cy="110" rx="7" ry="2.6"/><ellipse cx="49" cy="110" rx="7" ry="2.6"/>
</g>
<g opacity=".4" fill="#d9f1f5"><ellipse cx="40" cy="50" rx="20" ry="21"/></g>
<g opacity=".12" fill="#4b6a86"><circle cx="27" cy="47" r="3.6"/><circle cx="53.4" cy="47" r="3.6"/><path d="M28 58 Q40 70 52 58 Z"/></g>
<path opacity=".25" fill="#eef6f8" d="M41 84 L43 90 H49 L44.2 93.6 L46 99.6 L41 96 L36 99.6 L37.8 93.6 L33 90 H39 Z"/></svg>
</div></div></body></html>
